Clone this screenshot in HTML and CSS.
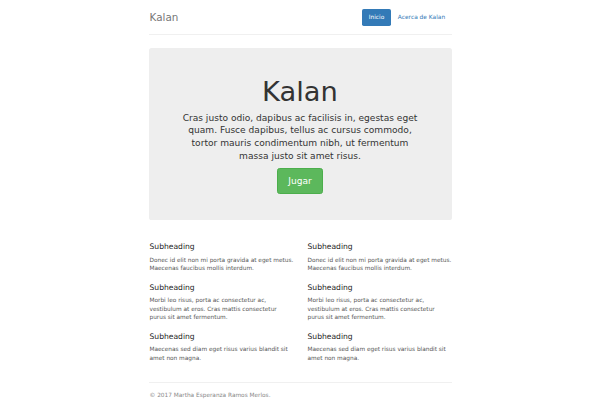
FILE: index.html
```html
<!DOCTYPE html>
<html lang="es">
<head>
<meta charset="utf-8">
<title>Kalan</title>
<link rel="stylesheet" href="styles.css">
</head>
<body>
<div class="container">
  <header class="header">
    <nav class="nav">
      <a class="pill active" href="#">Inicio</a>
      <a class="pill" href="#">Acerca de Kalan</a>
    </nav>
    <h3 class="brand">Kalan</h3>
  </header>

  <section class="jumbotron">
    <h1 class="jumbo-title">Kalan</h1>
    <p class="lead">Cras justo odio, dapibus ac facilisis in, egestas eget quam. Fusce dapibus, tellus ac cursus commodo, tortor mauris condimentum nibh, ut fermentum massa justo sit amet risus.</p>
    <p class="lead"><a class="btn" href="#">Jugar</a></p>
  </section>

  <section class="marketing">
    <div class="col">
      <h4 class="sub">Subheading</h4>
      <p class="txt">Donec id elit non mi porta gravida at eget metus. Maecenas faucibus mollis interdum.</p>
      <h4 class="sub">Subheading</h4>
      <p class="txt">Morbi leo risus, porta ac consectetur ac, vestibulum at eros. Cras mattis consectetur purus sit amet fermentum.</p>
      <h4 class="sub">Subheading</h4>
      <p class="txt">Maecenas sed diam eget risus varius blandit sit amet non magna.</p>
    </div>
    <div class="col">
      <h4 class="sub">Subheading</h4>
      <p class="txt">Donec id elit non mi porta gravida at eget metus. Maecenas faucibus mollis interdum.</p>
      <h4 class="sub">Subheading</h4>
      <p class="txt">Morbi leo risus, porta ac consectetur ac, vestibulum at eros. Cras mattis consectetur purus sit amet fermentum.</p>
      <h4 class="sub">Subheading</h4>
      <p class="txt">Maecenas sed diam eget risus varius blandit sit amet non magna.</p>
    </div>
  </section>

  <footer class="footer">
    <p class="txt">&copy; 2017 Martha Esperanza Ramos Merlos.</p>
  </footer>
</div>
</body>
</html>
```

FILE: styles.css
```css
* { box-sizing: border-box; }

html, body {
  margin: 0;
  padding: 0;
  background: #fff;
}

body {
  font-family: "DejaVu Sans", Verdana, sans-serif;
  color: #333;
  padding-top: 8.66px;
  padding-bottom: 8.66px;
}

.container {
  width: 303px;
  margin: 0 auto;
}

.header {
  padding-bottom: 8px;
  border-bottom: 1px solid #f0f0f0;
  margin-bottom: 13px;
  display: flex;
  flex-direction: row-reverse;
  justify-content: space-between;
  align-items: center;
}

.brand {
  margin: 0 0 0 1px;
  font-size: 10.4px;
  line-height: 17.32px;
  font-weight: normal;
  color: #777;
}

.nav {
  display: flex;
  gap: 0.87px;
}

.pill {
  display: block;
  padding: 4.33px 6.3px;
  font-size: 5.9px;
  line-height: 8.66px;
  border-radius: 1.73px;
  color: #337ab7;
  text-decoration: none;
}

.pill.active {
  background: #337ab7;
  color: #fff;
}

.jumbotron {
  background: #eee;
  border-radius: 2.6px;
  padding: 20.8px 30px 20.8px;
  margin-bottom: 13px;
  text-align: center;
}

.jumbo-title {
  margin: 8.66px 0 4.33px;
  font-size: 27.3px;
  line-height: 1.1;
  font-weight: normal;
  color: #333;
}

.lead {
  margin: 0 0 5px;
  font-size: 9.09px;
  line-height: 12.7px;
}

.btn {
  display: inline-block;
  padding: 6.06px 10.4px;
  font-size: 9.09px;
  line-height: 1.3333;
  border-radius: 2.6px;
  background: #5cb85c;
  border: 0.5px solid #4cae4c;
  color: #fff;
  text-decoration: none;
  vertical-align: middle;
}

.marketing {
  margin: 19.3px 0 15.3px;
  display: grid;
  grid-template-columns: 146px 145px;
  column-gap: 12px;
}

.col {
  padding-top: 0.01px;
}

.sub {
  margin: 4.33px 0 4.33px 1px;
  font-size: 7.6px;
  line-height: 1.1;
  font-weight: normal;
  color: #222;
}

.txt {
  margin: 0 0 4.33px 1px;
  font-size: 5.8px;
  line-height: 8.4px;
  color: #555;
}

.txt + .sub {
  margin-top: 11px;
}

.footer {
  padding-top: 8.2px;
  border-top: 1px solid #f0f0f0;
  color: #777;
}

.footer .txt {
  color: #888;
}
```
